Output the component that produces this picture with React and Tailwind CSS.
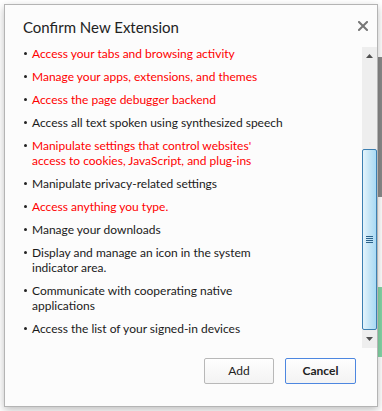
import React from "react";

const permissions = [
  { lines: ["Access your tabs and browsing activity"], warn: true },
  { lines: ["Manage your apps, extensions, and themes"], warn: true },
  { lines: ["Access the page debugger backend"], warn: true },
  { lines: ["Access all text spoken using synthesized speech"], warn: false },
  {
    lines: [
      "Manipulate settings that control websites'",
      "access to cookies, JavaScript, and plug-ins",
    ],
    warn: true,
  },
  { lines: ["Manipulate privacy-related settings"], warn: false },
  { lines: ["Access anything you type."], warn: true },
  { lines: ["Manage your downloads"], warn: false },
  {
    lines: ["Display and manage an icon in the system", "indicator area."],
    warn: false,
  },
  {
    lines: ["Communicate with cooperating native", "applications"],
    warn: false,
  },
  { lines: ["Access the list of your signed-in devices"], warn: false },
];

const Scrollbar = () => (
  <div className="flex w-[15px] shrink-0 flex-col bg-[#eeeeee]">
    {/* Up arrow */}
    <div className="flex h-[18px] items-center justify-center">
      <svg width="7" height="4" viewBox="0 0 7 4">
        <path d="M3.5 0L7 4H0z" fill="#505050" />
      </svg>
    </div>
    {/* Track */}
    <div className="flex-1 pt-[84px] pb-[1px]">
      <div className="flex h-[181px] items-center justify-center rounded-[2px] border border-[#3c7fb1] bg-gradient-to-r from-[#e4f4fc] via-[#c4e5f6] to-[#a9daf5]">
        <div className="flex flex-col gap-[1px]">
          <div className="h-[1px] w-[7px] bg-[#2c628b]" />
          <div className="h-[1px] w-[7px] bg-[#2c628b]" />
          <div className="h-[1px] w-[7px] bg-[#2c628b]" />
          <div className="h-[1px] w-[7px] bg-[#2c628b]" />
        </div>
      </div>
    </div>
    {/* Down arrow */}
    <div className="flex h-[18px] items-center justify-center">
      <svg width="7" height="4" viewBox="0 0 7 4">
        <path d="M0 0H7L3.5 4z" fill="#505050" />
      </svg>
    </div>
  </div>
);

export default function App() {
  return (
    <div
      className="relative h-[411px] w-[382px] overflow-hidden bg-white p-[4px]"
      style={{ fontFamily: 'Lato, "Open Sans", sans-serif' }}
    >
      {/* Page content peeking out behind the dialog */}
      <div className="absolute right-0 top-[57px] h-[140px] w-[4px] bg-[#8a8a8a]" />
      <div className="absolute right-0 top-[287px] h-[70px] w-[4px] bg-[#84d6a6]" />

      {/* Dialog */}
      <div className="relative flex h-[403px] w-[374px] flex-col border border-[#b4b4b4] bg-[#fcfcfc] shadow-[0_3px_8px_rgba(0,0,0,0.25)]">
        {/* Header */}
        <div className="flex h-[42px] shrink-0 items-start justify-between pl-[18px] pr-[7px] pt-[12px]">
          <h1 className="text-[15px] leading-[20px] text-[#222222]">
            Confirm New Extension
          </h1>
          <button className="mt-[2px] flex h-[14px] w-[14px] items-center justify-center">
            <svg width="10" height="10" viewBox="0 0 10 10">
              <path
                d="M1 1L9 9M9 1L1 9"
                stroke="#777777"
                strokeWidth="2"
                strokeLinecap="square"
              />
            </svg>
          </button>
        </div>

        {/* Permission list */}
        <div className="flex h-[301px] shrink-0">
          <div className="flex-1 overflow-hidden">
            <ul className="-mt-[1px] flex flex-col gap-[8px] pl-[19px]">
              {permissions.map((item, i) => (
                <li key={i} className="flex items-start">
                  <span className="mt-[6px] mr-[5px] h-[3px] w-[3px] shrink-0 rounded-full bg-[#222222]" />
                  <span
                    className={`text-[12px] leading-[15px] ${
                      item.warn ? "text-[#ff0000]" : "text-[#1a1a1a]"
                    }`}
                  >
                    {item.lines.map((line, j) => (
                      <span key={j} className="block whitespace-nowrap">
                        {line}
                      </span>
                    ))}
                  </span>
                </li>
              ))}
            </ul>
          </div>
          <Scrollbar />
        </div>

        {/* Buttons */}
        <div className="flex justify-end gap-[11px] pr-[21px] pt-[10px]">
          <button className="h-[26px] w-[70px] rounded-[2px] border border-[#b8b8b8] bg-gradient-to-b from-[#fefefe] to-[#f3f3f3] text-[12px] text-[#222222]">
            Add
          </button>
          <button className="h-[26px] w-[71px] rounded-[2px] border border-[#4d87e0] bg-gradient-to-b from-[#fefefe] to-[#f3f3f3] text-[12px] font-bold text-[#222222]">
            Cancel
          </button>
        </div>
      </div>
    </div>
  );
}
